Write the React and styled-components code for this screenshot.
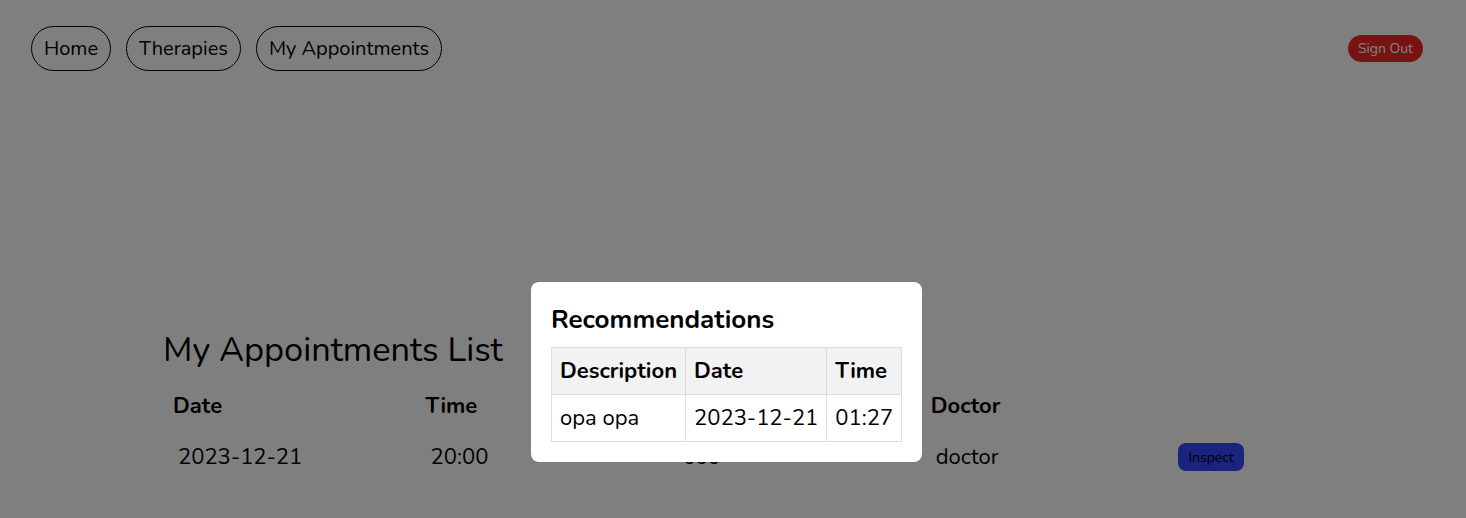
import React from "react";
import styled, { createGlobalStyle } from "styled-components";

const GlobalStyle = createGlobalStyle`
  body {
    margin: 0;
    background: #ffffff;
    font-family: "Nunito", "Lato", "Open Sans", sans-serif;
    color: #000;
  }
`;

const Page = styled.div`
  position: relative;
  height: 518px;
  overflow: hidden;
`;

const NavBar = styled.nav`
  display: flex;
  align-items: center;
  justify-content: space-between;
  padding: 26px 43px 0 31px;
`;

const NavLinks = styled.div`
  display: flex;
  gap: 15px;
`;

const NavButton = styled.button`
  height: 45px;
  padding: 0 12px;
  border: 1px solid #000;
  border-radius: 23px;
  background: transparent;
  font-family: inherit;
  font-size: 20px;
  color: #000;
`;

const SignOut = styled.button`
  height: 27px;
  padding: 0 10px;
  border: none;
  border-radius: 14px;
  background: #f22626;
  color: #fff;
  font-family: inherit;
  font-size: 14px;
`;

const Main = styled.main`
  padding: 256px 0 0 163px;
`;

const Heading = styled.h1`
  margin: 0 0 8px;
  font-size: 34.4px;
  font-weight: 400;
  line-height: 46px;
`;

const List = styled.table`
  width: 1263px;
  table-layout: fixed;
  border-collapse: collapse;
  font-size: 22px;
  line-height: 30px;
`;

const HeadCell = styled.th`
  padding: 10px 10px;
  text-align: left;
  font-weight: 700;
`;

const Cell = styled.td`
  padding: 11px ${(p) => (p.$button ? 5 : 15)}px;
  text-align: left;
  vertical-align: middle;
`;

const InspectButton = styled.button`
  display: block;
  height: 28px;
  padding: 0 10px;
  border: none;
  border-radius: 8px;
  background: #3446fc;
  color: #000;
  font-family: inherit;
  font-size: 14px;
`;

const Overlay = styled.div`
  position: absolute;
  inset: 0;
  background: rgba(0, 0, 0, 0.5);
`;

const Modal = styled.div`
  position: absolute;
  left: 531px;
  top: 282px;
  padding: 20px;
  background: #fff;
  border-radius: 8px;
`;

const ModalTitle = styled.h2`
  margin: 0 0 10px;
  font-size: 26px;
  font-weight: 700;
  line-height: 35px;
`;

const RecTable = styled.table`
  border-collapse: collapse;
  font-size: 22px;
  line-height: 30px;
`;

const RecHead = styled.th`
  padding: 8px;
  border: 1px solid #ddd;
  background: #f2f2f2;
  text-align: left;
  font-weight: 700;
`;

const RecCell = styled.td`
  padding: 8px;
  border: 1px solid #ddd;
  text-align: left;
`;

export default function App() {
  return (
    <Page>
      <GlobalStyle />
      <NavBar>
        <NavLinks>
          <NavButton>Home</NavButton>
          <NavButton>Therapies</NavButton>
          <NavButton>My Appointments</NavButton>
        </NavLinks>
        <SignOut>Sign Out</SignOut>
      </NavBar>
      <Main>
        <Heading>My Appointments List</Heading>
        <List>
          <thead>
            <tr>
              <HeadCell>Date</HeadCell>
              <HeadCell>Time</HeadCell>
              <HeadCell>Therapy</HeadCell>
              <HeadCell>Doctor</HeadCell>
              <HeadCell />
            </tr>
          </thead>
          <tbody>
            <tr>
              <Cell>2023-12-21</Cell>
              <Cell>20:00</Cell>
              <Cell>ooo</Cell>
              <Cell>doctor</Cell>
              <Cell $button>
                <InspectButton>Inspect</InspectButton>
              </Cell>
            </tr>
          </tbody>
        </List>
      </Main>
      <Overlay />
      <Modal>
        <ModalTitle>Recommendations</ModalTitle>
        <RecTable>
          <thead>
            <tr>
              <RecHead>Description</RecHead>
              <RecHead>Date</RecHead>
              <RecHead>Time</RecHead>
            </tr>
          </thead>
          <tbody>
            <tr>
              <RecCell>opa opa</RecCell>
              <RecCell>2023-12-21</RecCell>
              <RecCell>01:27</RecCell>
            </tr>
          </tbody>
        </RecTable>
      </Modal>
    </Page>
  );
}
